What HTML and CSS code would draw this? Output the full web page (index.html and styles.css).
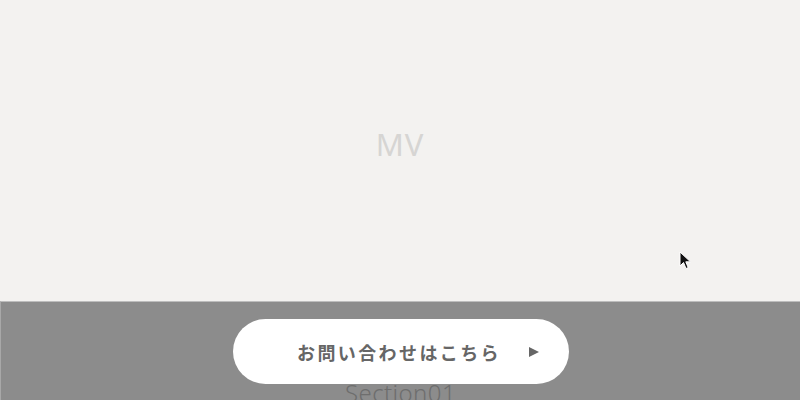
FILE: index.html
```html
<!DOCTYPE html>
<html lang="ja">
<head>
    <meta charset="UTF-8">
    <meta name="viewport" content="width=device-width, initial-scale=1.0">
    <title>MV</title>
    <link rel="stylesheet" href="styles.css">
</head>
<body>
    <section class="mv">
        <p class="mv-title">MV</p>
    </section>

    <section class="section">
        <h2 class="section-title">Section01</h2>
    </section>

    <a class="contact-btn" href="#">
        <span class="contact-label">お問い合わせはこちら</span>
        <span class="contact-arrow"></span>
    </a>

    <svg class="cursor" width="14" height="20" viewBox="0 0 14 20">
        <path d="M1 1 L1 15 L4.5 11.5 L7 17.5 L9.2 16.6 L6.8 10.8 L11.5 10.8 Z" fill="#111" stroke="#fff" stroke-width="1"/>
    </svg>
</body>
</html>
```

FILE: styles.css
```css
* {
    box-sizing: border-box;
}
body {
    margin: 0;
    font-family: "Noto Sans", "Noto Sans CJK JP", sans-serif;
    background-color: #8c8c8c;
}
.mv {
    height: 301px;
    background-color: #f3f2f0;
    display: flex;
    align-items: center;
    justify-content: center;
    padding-bottom: 14px;
}
.mv-title {
    margin: 0;
    font-size: 31px;
    color: #d6d5d3;
    letter-spacing: 1px;
}
.section {
    border-top: 1px solid #bdbdbd;
    border-left: 1px solid #a8a8a8;
    background-color: #8c8c8c;
    min-height: 300px;
    padding-top: 74px;
}
.section-title {
    margin: 0;
    text-align: center;
    font-size: 24px;
    font-weight: 300;
    color: #6e6e6e;
    letter-spacing: 0.4px;
}
.contact-btn {
    position: fixed;
    left: 233px;
    bottom: 16px;
    width: 336px;
    height: 65px;
    border-radius: 33px;
    background-color: #fff;
    display: flex;
    align-items: center;
    justify-content: center;
    gap: 28px;
    padding-left: 34px;
    text-decoration: none;
}
.contact-label {
    font-family: "Noto Sans CJK JP", sans-serif;
    font-size: 18px;
    font-weight: 700;
    color: #666;
    letter-spacing: 2.4px;
}
.contact-arrow {
    width: 0;
    height: 0;
    border-top: 5px solid transparent;
    border-bottom: 5px solid transparent;
    border-left: 10px solid #666;
}
.cursor {
    position: absolute;
    left: 679px;
    top: 251px;
}
```
